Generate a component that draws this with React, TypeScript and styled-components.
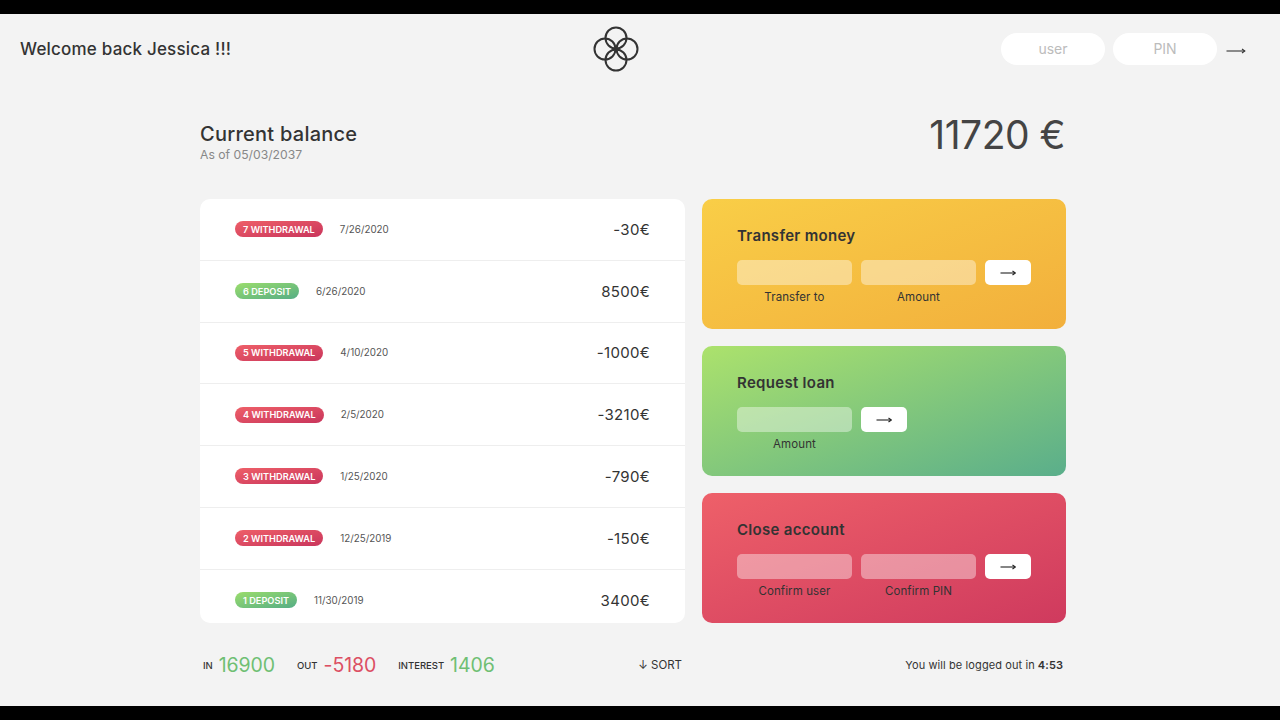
import React from 'react';
import styled, { createGlobalStyle } from 'styled-components';

type Tone = 'deposit' | 'withdrawal';
type CardKind = 'transfer' | 'loan' | 'close';

interface Movement {
  id: number;
  type: Tone;
  date: string;
  value: string;
}

const movements: Movement[] = [
  { id: 7, type: 'withdrawal', date: '7/26/2020', value: '-30€' },
  { id: 6, type: 'deposit', date: '6/26/2020', value: '8500€' },
  { id: 5, type: 'withdrawal', date: '4/10/2020', value: '-1000€' },
  { id: 4, type: 'withdrawal', date: '2/5/2020', value: '-3210€' },
  { id: 3, type: 'withdrawal', date: '1/25/2020', value: '-790€' },
  { id: 2, type: 'withdrawal', date: '12/25/2019', value: '-150€' },
  { id: 1, type: 'deposit', date: '11/30/2019', value: '3400€' },
];

const cardGradients: Record<CardKind, string> = {
  transfer: 'linear-gradient(to top left, #f2af3c, #f9ce47)',
  loan: 'linear-gradient(to top left, #5aae8b, #acE26c)',
  close: 'linear-gradient(to top left, #cf3a5e, #ee6069)',
};

const GlobalStyle = createGlobalStyle`
  * {
    box-sizing: border-box;
    margin: 0;
    padding: 0;
  }

  body {
    font-family: Inter, "Liberation Sans", sans-serif;
    background: #f3f3f3;
    color: #333;
  }
`;

const Page = styled.div`
  width: 1280px;
  height: 720px;
  display: flex;
  flex-direction: column;
  overflow: hidden;
`;

const Letterbox = styled.div`
  height: 14px;
  flex-shrink: 0;
  background: #000;
`;

const Screen = styled.div`
  flex: 1;
  background: #f3f3f3;
`;

const Nav = styled.nav`
  height: 70px;
  padding: 0 34px 0 20px;
  display: flex;
  align-items: center;
  justify-content: space-between;
`;

const Welcome = styled.p`
  width: 210px;
  font-size: 17px;
  font-weight: 500;
  letter-spacing: 0.2px;
  white-space: nowrap;
  color: #333;
`;

const Login = styled.form`
  display: flex;
  align-items: center;
  gap: 8px;
`;

const LoginInput = styled.input`
  width: 104px;
  height: 32px;
  padding-bottom: 2px;
  border: none;
  border-radius: 16px;
  background: #fff;
  font-family: Inter, sans-serif;
  font-size: 14px;
  text-align: center;
  outline: none;

  &::placeholder {
    color: #bcbcbc;
    opacity: 1;
  }
`;

const LoginButton = styled.button`
  width: 20px;
  margin: 3px 0 0 1px;
  display: flex;
  background: none;
  border: none;
  color: #333;
`;

const Main = styled.main`
  width: 865px;
  margin-left: 200px;
`;

const Balance = styled.section`
  height: 115px;
  padding-top: 27px;
  display: flex;
  justify-content: space-between;
  align-items: flex-start;
`;

const BalanceInfo = styled.div`
  padding-top: 10px;
`;

const BalanceLabel = styled.h2`
  font-size: 20px;
  line-height: 26px;
  font-weight: 500;
  letter-spacing: 0.25px;
  color: #333;
`;

const BalanceDate = styled.p`
  font-size: 12.2px;
  line-height: 16px;
  color: #888;
`;

const BalanceValue = styled.p`
  font-size: 39px;
  line-height: 48px;
  font-weight: 400;
  letter-spacing: -0.5px;
  color: #444;
`;

const Columns = styled.div`
  display: grid;
  grid-template-columns: 485px 363px;
  column-gap: 17px;
`;

const Movements = styled.ul`
  height: 424px;
  list-style: none;
  background: #fff;
  border-radius: 10px;
  overflow: hidden;
`;

const MovementRow = styled.li`
  height: 61.75px;
  padding: 0 35px;
  display: flex;
  align-items: center;
  border-bottom: 1px solid #eee;

  &:last-child {
    border-bottom: none;
  }
`;

const Badge = styled.span<{ $tone: Tone }>`
  height: 16px;
  padding: 0 8px;
  display: flex;
  align-items: center;
  border-radius: 8px;
  font-size: 9.2px;
  font-weight: 600;
  text-transform: uppercase;
  white-space: nowrap;
  color: #fff;
  background: ${(p) =>
    p.$tone === 'deposit'
      ? 'linear-gradient(to top left, #55ad85, #9bdd6c)'
      : 'linear-gradient(to top left, #c9355c, #ee5f68)'};
`;

const MovementDate = styled.span`
  margin-left: 17px;
  font-size: 9.8px;
  color: #555;
`;

const MovementValue = styled.span`
  margin-left: auto;
  font-size: 15px;
  letter-spacing: 0.3px;
  color: #333;
`;

const Operations = styled.div`
  display: grid;
  grid-template-rows: repeat(3, 130px);
  row-gap: 17px;
`;

const Card = styled.section<{ $kind: CardKind }>`
  padding: 27px 35px 0;
  border-radius: 10px;
  background: ${(p) => cardGradients[p.$kind]};
`;

const CardTitle = styled.h3`
  margin-bottom: 14px;
  font-size: 15px;
  line-height: 20px;
  font-weight: 600;
  letter-spacing: 0.3px;
  color: #333;
`;

const CardForm = styled.form<{ $fields: number }>`
  display: grid;
  grid-template-columns: ${(p) => (p.$fields === 2 ? '115px 115px 46px' : '115px 46px')};
  column-gap: 9px;
  row-gap: 5px;
`;

const CardInput = styled.input`
  height: 25px;
  border: none;
  border-radius: 5px;
  background: rgba(255, 255, 255, 0.4);
  outline: none;
`;

const CardButton = styled.button`
  height: 25px;
  border: none;
  border-radius: 5px;
  background: #fff;
  color: #222;
  display: flex;
  align-items: center;
  justify-content: center;
`;

const CardLabel = styled.label`
  font-size: 11.5px;
  line-height: 14px;
  letter-spacing: 0.1px;
  text-align: center;
  color: #333;
`;

const Summary = styled.div`
  height: 83px;
  padding: 0 3px;
  display: flex;
  align-items: center;
`;

const SummaryLabel = styled.span`
  margin: 2px 6px 0 0;
  font-size: 9.5px;
  font-weight: 500;
  text-transform: uppercase;
  color: #333;
`;

const SummaryValue = styled.span<{ $tone: Tone }>`
  margin-right: 22px;
  font-size: 19.5px;
  letter-spacing: -0.1px;
  color: ${(p) => (p.$tone === 'deposit' ? '#6fbf73' : '#dc4f63')};
`;

const SortButton = styled.button`
  margin-left: auto;
  border: none;
  background: none;
  font-family: Inter, sans-serif;
  font-size: 11.5px;
  font-weight: 400;
  color: #333;
`;

const Timer = styled.p`
  height: 83px;
  padding-right: 2px;
  display: flex;
  align-items: center;
  justify-content: flex-end;
  gap: 3px;
  font-size: 11px;
  letter-spacing: 0.1px;
  color: #333;

  strong {
    font-weight: 600;
  }
`;

const Logo = () => (
  <svg width="46" height="46" viewBox="0 0 46 46" fill="none" stroke="#333" strokeWidth="2">
    <circle cx="23" cy="12" r="10.5" />
    <circle cx="23" cy="34" r="10.5" />
    <circle cx="12" cy="23" r="10.5" />
    <circle cx="34" cy="23" r="10.5" />
  </svg>
);

const Arrow = () => (
  <svg width="20" height="8" viewBox="0 0 20 8" fill="none" stroke="currentColor" strokeWidth="1.1">
    <path d="M0.5 4H18.5" />
    <path d="M16 2L18.8 4L16 6" />
  </svg>
);

const SmallArrow = () => (
  <svg width="16" height="8" viewBox="0 0 16 8" fill="none" stroke="currentColor" strokeWidth="1.1">
    <path d="M0.5 4H15" />
    <path d="M12.5 2L15.3 4L12.5 6" />
  </svg>
);

const App: React.FC = () => {
  return (
    <Page>
      <GlobalStyle />
      <Letterbox />
      <Screen>
        <Nav>
          <Welcome>Welcome back Jessica !!!</Welcome>
          <Logo />
          <Login>
            <LoginInput placeholder="user" />
            <LoginInput placeholder="PIN" />
            <LoginButton type="button">
              <Arrow />
            </LoginButton>
          </Login>
        </Nav>

        <Main>
          <Balance>
            <BalanceInfo>
              <BalanceLabel>Current balance</BalanceLabel>
              <BalanceDate>As of 05/03/2037</BalanceDate>
            </BalanceInfo>
            <BalanceValue>11720 €</BalanceValue>
          </Balance>

          <Columns>
            <Movements>
              {movements.map((m) => (
                <MovementRow key={m.id}>
                  <Badge $tone={m.type}>
                    {m.id} {m.type}
                  </Badge>
                  <MovementDate>{m.date}</MovementDate>
                  <MovementValue>{m.value}</MovementValue>
                </MovementRow>
              ))}
            </Movements>

            <Operations>
              <Card $kind="transfer">
                <CardTitle>Transfer money</CardTitle>
                <CardForm $fields={2}>
                  <CardInput />
                  <CardInput />
                  <CardButton type="button">
                    <SmallArrow />
                  </CardButton>
                  <CardLabel>Transfer to</CardLabel>
                  <CardLabel>Amount</CardLabel>
                </CardForm>
              </Card>
              <Card $kind="loan">
                <CardTitle>Request loan</CardTitle>
                <CardForm $fields={1}>
                  <CardInput />
                  <CardButton type="button">
                    <SmallArrow />
                  </CardButton>
                  <CardLabel>Amount</CardLabel>
                </CardForm>
              </Card>
              <Card $kind="close">
                <CardTitle>Close account</CardTitle>
                <CardForm $fields={2}>
                  <CardInput />
                  <CardInput />
                  <CardButton type="button">
                    <SmallArrow />
                  </CardButton>
                  <CardLabel>Confirm user</CardLabel>
                  <CardLabel>Confirm PIN</CardLabel>
                </CardForm>
              </Card>
            </Operations>

            <Summary>
              <SummaryLabel>In</SummaryLabel>
              <SummaryValue $tone="deposit">16900</SummaryValue>
              <SummaryLabel>Out</SummaryLabel>
              <SummaryValue $tone="withdrawal">-5180</SummaryValue>
              <SummaryLabel>Interest</SummaryLabel>
              <SummaryValue $tone="deposit">1406</SummaryValue>
              <SortButton type="button">↓ SORT</SortButton>
            </Summary>
            <Timer>
              You will be logged out in <strong>4:53</strong>
            </Timer>
          </Columns>
        </Main>
      </Screen>
      <Letterbox />
    </Page>
  );
};

export default App;
